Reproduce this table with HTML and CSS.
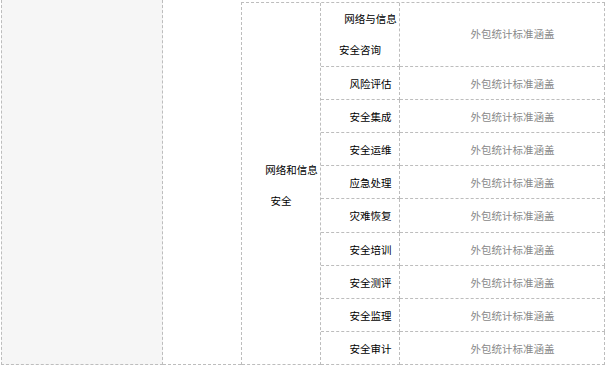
FILE: index.html
```html
<!DOCTYPE html>
<html lang="zh">
<head>
<meta charset="utf-8">
<link rel="stylesheet" href="styles.css">
</head>
<body>
<div class="page">
  <div class="col-side"></div>
  <div class="col-blank"></div>
  <div class="grid">
    <div class="cell cat">网络和信息<br>安全</div>
    <div class="cell sub first">网络与信息<br>安全咨询</div>
    <div class="cell val first">外包统计标准涵盖</div>
    <div class="cell sub">风险评估</div>
    <div class="cell val">外包统计标准涵盖</div>
    <div class="cell sub">安全集成</div>
    <div class="cell val">外包统计标准涵盖</div>
    <div class="cell sub">安全运维</div>
    <div class="cell val">外包统计标准涵盖</div>
    <div class="cell sub">应急处理</div>
    <div class="cell val">外包统计标准涵盖</div>
    <div class="cell sub">灾难恢复</div>
    <div class="cell val">外包统计标准涵盖</div>
    <div class="cell sub">安全培训</div>
    <div class="cell val">外包统计标准涵盖</div>
    <div class="cell sub">安全测评</div>
    <div class="cell val">外包统计标准涵盖</div>
    <div class="cell sub">安全监理</div>
    <div class="cell val">外包统计标准涵盖</div>
    <div class="cell sub">安全审计</div>
    <div class="cell val">外包统计标准涵盖</div>
  </div>
</div>
</body>
</html>
```

FILE: styles.css
```css
html, body {
  margin: 0;
  padding: 0;
  background: #fff;
}
body {
  font-family: "Noto Sans CJK SC", "Noto Sans", sans-serif;
  font-size: 10.5px;
  color: #000;
}
.page {
  display: flex;
  align-items: flex-start;
  padding-left: 1px;
  width: 606px;
  box-sizing: border-box;
}
.col-side {
  width: 162px;
  height: 365px;
  box-sizing: border-box;
  background: #f6f6f6;
  border-left: 1px dashed #bdbdbd;
  border-right: 1px dashed #bdbdbd;
  border-bottom: 1px dashed #bdbdbd;
}
.col-blank {
  width: 78px;
  height: 365px;
  box-sizing: border-box;
  border-bottom: 1px dashed #bdbdbd;
}
.grid {
  margin-top: 2px;
  width: 364px;
  height: 363px;
  box-sizing: border-box;
  border-left: 1px dashed #bdbdbd;
  border-top: 1px dashed #bdbdbd;
  display: grid;
  grid-template-columns: 79px 79px 205px;
  grid-template-rows: 64px repeat(9, 1fr);
}
.cell {
  box-sizing: border-box;
  border-right: 1px dashed #bdbdbd;
  border-bottom: 1px dashed #bdbdbd;
  text-align: center;
  text-indent: 2em;
  line-height: 31px;
  white-space: nowrap;
  padding-top: 1px;
}
.cell.cat {
  grid-row: 1 / span 10;
  padding-top: 151px;
  color: #000;
}
.cell.sub {
  color: #000;
}
.cell.val {
  color: #888;
}
.cell.sub.first {
  padding-top: 0;
}
.cell.val.first {
  padding-top: 0;
  line-height: 62px;
}
```
